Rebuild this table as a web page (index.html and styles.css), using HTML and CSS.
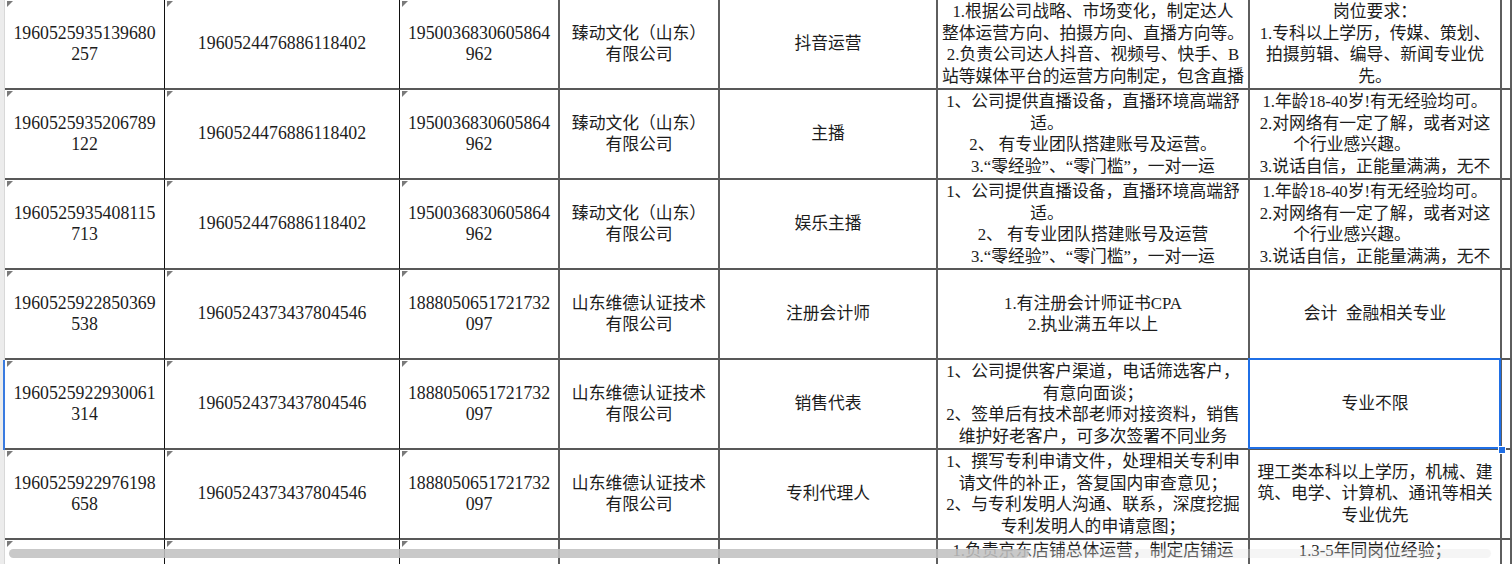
FILE: index.html
```html
<!DOCTYPE html>
<html lang="zh-CN">
<head>
<meta charset="utf-8">
<title>Sheet</title>
<link rel="stylesheet" href="styles.css">
</head>
<body>
<div class="sheet">
  <!-- row 1 -->
  <div class="g"></div>
  <div class="c n b1"><span class="tri"></span><div class="t">1960525935139680<br>257</div></div>
  <div class="c n b1"><span class="tri"></span><div class="t">1960524476886118402</div></div>
  <div class="c n"><span class="tri"></span><div class="t">1950036830605864<br>962</div></div>
  <div class="c"><div class="t">臻动文化（山东）<br>有限公司</div></div>
  <div class="c"><div class="t">抖音运营</div></div>
  <div class="c"><div class="t">1.根据公司战略、市场变化，制定达人<br>整体运营方向、拍摄方向、直播方向等。<br>2.负责公司达人抖音、视频号、快手、B<br>站等媒体平台的运营方向制定，包含直播</div></div>
  <div class="c"><div class="t">岗位要求：<br>1.专科以上学历，传媒、策划、<br>拍摄剪辑、编导、新闻专业优<br>先。</div></div>
  <div class="c"></div>

  <!-- row 2 -->
  <div class="g"></div>
  <div class="c n b1"><span class="tri"></span><div class="t">1960525935206789<br>122</div></div>
  <div class="c n b1"><span class="tri"></span><div class="t">1960524476886118402</div></div>
  <div class="c n"><span class="tri"></span><div class="t">1950036830605864<br>962</div></div>
  <div class="c"><div class="t">臻动文化（山东）<br>有限公司</div></div>
  <div class="c"><div class="t">主播</div></div>
  <div class="c"><div class="t">1、公司提供直播设备，直播环境高端舒<br><span class="tail-a">适。</span><br>2、 有专业团队搭建账号及运营。<br>3.“零经验”、“零门槛”，一对一运</div></div>
  <div class="c"><div class="t">1.年龄18-40岁!有无经验均可。<br>2.对网络有一定了解，或者对这<br><span class="tail-b">个行业感兴趣。</span><br>3.说话自信，正能量满满，无不</div></div>
  <div class="c"></div>

  <!-- row 3 -->
  <div class="g"></div>
  <div class="c n b1"><span class="tri"></span><div class="t">1960525935408115<br>713</div></div>
  <div class="c n b1"><span class="tri"></span><div class="t">1960524476886118402</div></div>
  <div class="c n"><span class="tri"></span><div class="t">1950036830605864<br>962</div></div>
  <div class="c"><div class="t">臻动文化（山东）<br>有限公司</div></div>
  <div class="c"><div class="t">娱乐主播</div></div>
  <div class="c"><div class="t">1、公司提供直播设备，直播环境高端舒<br><span class="tail-a">适。</span><br>2、 有专业团队搭建账号及运营<br>3.“零经验”、“零门槛”，一对一运</div></div>
  <div class="c"><div class="t">1.年龄18-40岁!有无经验均可。<br>2.对网络有一定了解，或者对这<br><span class="tail-b">个行业感兴趣。</span><br>3.说话自信，正能量满满，无不</div></div>
  <div class="c"></div>

  <!-- row 4 -->
  <div class="g"></div>
  <div class="c n b1"><span class="tri"></span><div class="t">1960525922850369<br>538</div></div>
  <div class="c n b1"><span class="tri"></span><div class="t">1960524373437804546</div></div>
  <div class="c n"><span class="tri"></span><div class="t">1888050651721732<br>097</div></div>
  <div class="c"><div class="t">山东维德认证技术<br>有限公司</div></div>
  <div class="c"><div class="t">注册会计师</div></div>
  <div class="c"><div class="t">1.有注册会计师证书CPA<br>2.执业满五年以上</div></div>
  <div class="c"><div class="t">会计&nbsp;&nbsp;金融相关专业</div></div>
  <div class="c"></div>

  <!-- row 5 -->
  <div class="g sel-row"></div>
  <div class="c n b1"><span class="tri"></span><div class="t">1960525922930061<br>314</div></div>
  <div class="c n b1"><span class="tri"></span><div class="t">1960524373437804546</div></div>
  <div class="c n"><span class="tri"></span><div class="t">1888050651721732<br>097</div></div>
  <div class="c"><div class="t">山东维德认证技术<br>有限公司</div></div>
  <div class="c"><div class="t">销售代表</div></div>
  <div class="c"><div class="t">1、公司提供客户渠道，电话筛选客户，<br>有意向面谈；<br>2、签单后有技术部老师对接资料，销售<br>维护好老客户，可多次签署不同业务</div></div>
  <div class="c active"><div class="t">专业不限</div><span class="handle"></span></div>
  <div class="c"></div>

  <!-- row 6 -->
  <div class="g"></div>
  <div class="c n b1"><span class="tri"></span><div class="t">1960525922976198<br>658</div></div>
  <div class="c n b1"><span class="tri"></span><div class="t">1960524373437804546</div></div>
  <div class="c n"><span class="tri"></span><div class="t">1888050651721732<br>097</div></div>
  <div class="c"><div class="t">山东维德认证技术<br>有限公司</div></div>
  <div class="c"><div class="t">专利代理人</div></div>
  <div class="c"><div class="t">1、撰写专利申请文件，处理相关专利申<br>请文件的补正，答复国内审查意见；<br>2、与专利发明人沟通、联系，深度挖掘<br>专利发明人的申请意图；</div></div>
  <div class="c"><div class="t">理工类本科以上学历，机械、建<br>筑、电学、计算机、通讯等相关<br>专业优先</div></div>
  <div class="c"></div>

  <!-- row 7 (partly visible) -->
  <div class="g"></div>
  <div class="c n b1"><span class="tri"></span></div>
  <div class="c n b1"><span class="tri"></span></div>
  <div class="c n"><span class="tri"></span></div>
  <div class="c"></div>
  <div class="c"></div>
  <div class="c top"><div class="t">1.负责京东店铺总体运营，制定店铺运</div></div>
  <div class="c top"><div class="t">1.3-5年同岗位经验；</div></div>
  <div class="c"></div>
</div>
<div class="hscroll"><div class="thumb"></div></div>
</body>
</html>
```

FILE: styles.css
```css
html, body {
  margin: 0;
  padding: 0;
  background: #ffffff;
  overflow: hidden;
  width: 1512px;
  height: 564px;
}
body {
  position: relative;
  font-family: "Liberation Serif", "Noto Sans CJK SC", serif;
  font-size: 16.8px;
  color: #1c1c1c;
}
.sheet {
  display: grid;
  grid-template-columns: 5px 160px 235px 160px 160px 218px 312px 252px 1fr;
  grid-auto-rows: 90px;
}
.g {
  background: #ececec;
  border-right: 1px solid #d8d8d8;
  box-sizing: border-box;
}
.g.sel-row {
  background: #ececec;
  border-right: 2px solid #3a7be0;
}
.c {
  position: relative;
  box-sizing: border-box;
  border-right: 2px solid #5e5e5e;
  border-bottom: 2px solid #585858;
  overflow: hidden;
  display: flex;
  flex-direction: column;
  justify-content: safe center;
  align-items: center;
}
.c.top {
  justify-content: flex-start;
}
.c.b1 {
  border-right: 1px solid #111111;
}
.t {
  white-space: nowrap;
  text-align: center;
  line-height: 21.5px;
}
.n .t {
  font-size: 17.8px;
}
.tri {
  position: absolute;
  left: 2px;
  top: 1px;
  width: 0;
  height: 0;
  border-top: 6px solid #7a7a7a;
  border-right: 6px solid transparent;
}
.tail-a {
  padding-right: 92px;
}
.tail-b {
  padding-right: 46px;
}
.c.active {
  overflow: visible;
  z-index: 3;
}
.c.active::after {
  content: "";
  position: absolute;
  left: -2px;
  top: -2px;
  right: -1px;
  bottom: -1px;
  border: 2px solid #1f6fe6;
  pointer-events: none;
}
.handle {
  position: absolute;
  right: -6px;
  bottom: -6px;
  width: 6px;
  height: 6px;
  background: #1f6fe6;
  border: 1px solid #ffffff;
  z-index: 4;
}
.hscroll {
  position: absolute;
  left: 9px;
  top: 549px;
  width: 1482px;
  height: 9px;
  border-radius: 5px;
  background: rgba(225, 225, 225, 0.35);
}
.thumb {
  width: 1020px;
  height: 9px;
  border-radius: 5px;
  background: rgba(190, 190, 190, 0.8);
}
```
